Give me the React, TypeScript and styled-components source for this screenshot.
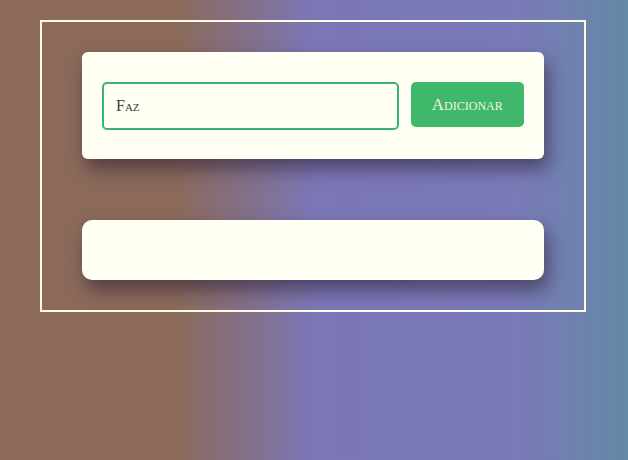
import React, { useEffect, useRef, useState } from "react";
import styled, { createGlobalStyle } from "styled-components";

const Global = createGlobalStyle`
  html, body {
    margin: 0;
    padding: 0;
    min-height: 100%;
  }
  body {
    width: 628px;
    height: 460px;
    overflow: hidden;
    background: linear-gradient(to right, #8b6a5a 0%, #8b6a5a 28%, #7b76b6 50%, #7a7ab8 82%, #6489a6 100%);
    font-family: "Liberation Serif", "DejaVu Serif", serif;
  }
`;

const Page = styled.div`
  padding: 20px 0 0 40px;
`;

const Frame = styled.div`
  box-sizing: border-box;
  width: 546px;
  border: 2px solid #fffbe6;
  padding: 30px 39px 30px 40px;
  display: flex;
  flex-direction: column;
  gap: 61px;
`;

const Card = styled.div<{ $radius: number; $height: number }>`
  box-sizing: border-box;
  width: 462px;
  height: ${(p) => p.$height}px;
  background: #fffff4;
  border-radius: ${(p) => p.$radius}px;
  box-shadow: 4px 10px 18px rgba(40, 28, 45, 0.55);
`;

const Form = styled(Card)`
  display: flex;
  align-items: flex-start;
  gap: 12px;
  padding: 30px 20px;
`;

const Input = styled.input`
  box-sizing: border-box;
  width: 298px;
  height: 48px;
  border: 2px solid #3cb371;
  border-radius: 5px;
  background: transparent;
  padding: 0 12px;
  font-family: "Liberation Serif", "DejaVu Serif", serif;
  font-variant: small-caps;
  font-size: 16px;
  color: #3a3a3a;
  outline: none;
  caret-color: #000;
`;

const Button = styled.button`
  box-sizing: border-box;
  width: 114px;
  height: 45px;
  border: none;
  border-radius: 5px;
  background: #3fb86c;
  color: #f4f4e4;
  font-family: "Liberation Serif", "DejaVu Serif", serif;
  font-variant: small-caps;
  font-size: 17px;
  cursor: pointer;
`;

export default function App() {
  const [text, setText] = useState("Faz");
  const ref = useRef<HTMLInputElement>(null);
  useEffect(() => {
    const el = ref.current;
    if (el) {
      el.focus();
      el.setSelectionRange(el.value.length, el.value.length);
    }
  }, []);
  return (
    <>
      <Global />
      <Page>
        <Frame>
          <Form $radius={6} $height={107}>
            <Input ref={ref} autoFocus value={text} onChange={(e) => setText(e.target.value)} />
            <Button>Adicionar</Button>
          </Form>
          <Card $radius={10} $height={60} />
        </Frame>
      </Page>
    </>
  );
}
